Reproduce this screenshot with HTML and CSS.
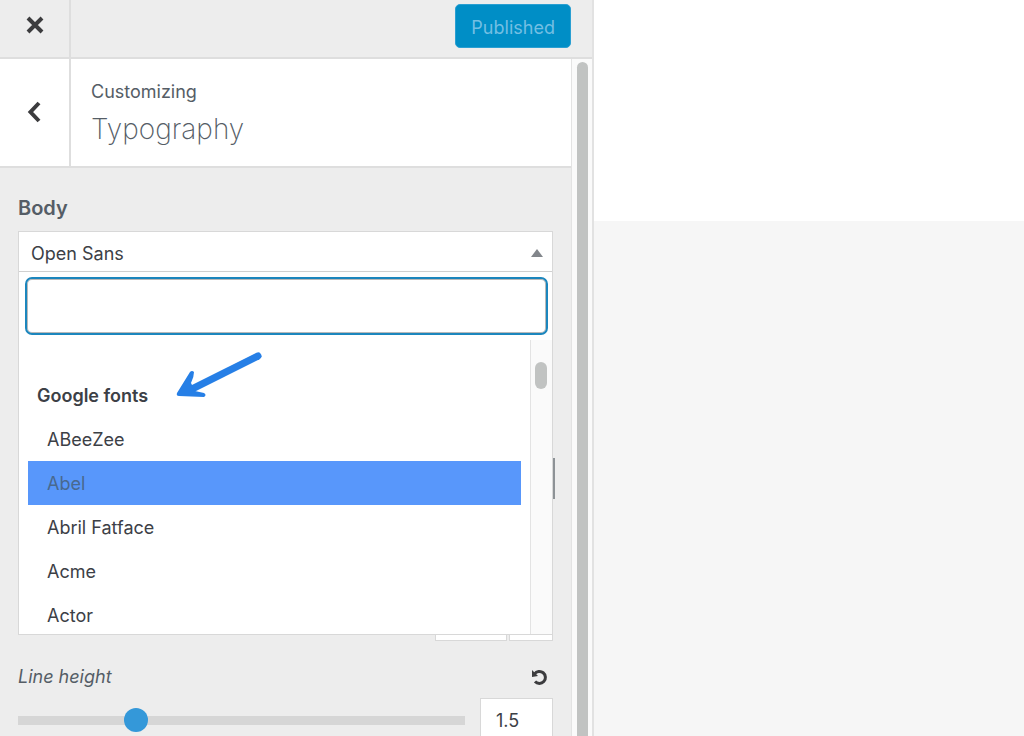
FILE: index.html
```html
<!DOCTYPE html>
<html lang="en">
<head>
    <meta charset="UTF-8">
    <title>Customize Typography</title>
    <link rel="stylesheet" href="styles.css">
</head>
<body>

<aside class="sidebar">
    <header class="topbar">
        <button type="button" class="close" aria-label="Close">
            <svg width="20" height="20" viewBox="0 0 20 20"><path d="M3 3L17 17M17 3L3 17" stroke="#3c3c3e" stroke-width="4"/></svg>
        </button>
        <button type="button" class="publish">Published</button>
    </header>

    <div class="scroller">
        <form class="panel">
            <div class="panel-head">
                <button type="button" class="back" aria-label="Back">
                    <svg width="24" height="24" viewBox="0 0 24 24"><path d="M16 3L7.500 12L16 21" fill="none" stroke="#3c3c3e" stroke-width="4"/></svg>
                </button>
                <div class="panel-title">
                    <span>Customizing</span>
                    <h2>Typography</h2>
                </div>
            </div>

            <div class="controls">
                <label class="label" for="font">Body</label>
                <div class="dropdown">
                    <select id="font" class="current">
                        <option>Open Sans</option>
                    </select>
                    <svg class="caret" width="12" height="8" viewBox="0 0 12 8"><path d="M0 8L6 0L12 8Z" fill="#82868b"/></svg>
                    <input type="search" class="search" aria-label="Search fonts">
                    <div class="list-wrap">
                        <ul class="list">
                            <li class="group">Google fonts</li>
                            <li>ABeeZee</li>
                            <li class="active">Abel</li>
                            <li>Abril Fatface</li>
                            <li>Acme</li>
                            <li>Actor</li>
                        </ul>
                        <div class="list-scroll"><div class="list-thumb"></div></div>
                    </div>
                    <div class="handle"></div>
                    <svg class="arrow" width="88" height="52" viewBox="0 0 88 52"><path d="M82 7L16 40" stroke="#267fe6" stroke-width="7" stroke-linecap="round"/><path d="M1 44L14 23Q16 21 18 23Q18 28 15 34L19 42L28 44Q31 46 28 48L3 47Q0 47 1 44Z" fill="#267fe6"/></svg>
                </div>
                <div class="units"><span class="unit-wide"></span><span class="unit"></span></div>

                <div class="row">
                    <label class="sub-label" for="line-height">Line height</label>
                    <button type="button" class="reset" aria-label="Reset">
                        <svg width="18" height="18" viewBox="0 0 18 18"><path d="M4.500 6A6 6 0 1 1 5 13.500" fill="none" stroke="#3c3c3e" stroke-width="3"/><path d="M2 2V9L8 8Z" fill="#3c3c3e"/></svg>
                    </button>
                </div>
                <div class="row">
                    <input type="range" id="line-height" class="range" min="0" max="100" value="25">
                    <input type="text" class="number" value="1.5" aria-label="Line height value">
                </div>
            </div>
        </form>
        <div class="scrollbar"><div class="thumb"></div></div>
    </div>
</aside>

<main class="preview">
    <div class="preview-head"></div>
</main>

</body>
</html>
```

FILE: styles.css
```css
* {
    box-sizing: border-box;
}
body {
    margin: 0;
    height: 100vh;
    display: flex;
    overflow: hidden;
    font-family: Inter, "Liberation Sans", sans-serif;
    font-size: 18px;
    color: #3c4046;
    background-color: #f6f6f6;
}
button {
    border: none;
    padding: 0;
    background: none;
    cursor: pointer;
}
input, select {
    font: inherit;
    color: inherit;
    background-color: white;
}
svg {
    display: block;
}
.sidebar {
    width: 58%;
    display: flex;
    flex-direction: column;
    background-color: #ededed;
    border-right: 2px solid #e2e2e2;
}
.preview {
    flex: 1;
}
.preview-head {
    height: 30%;
    background-color: white;
}
.topbar {
    display: flex;
    justify-content: space-between;
    height: 59px;
    flex-shrink: 0;
    border-bottom: 2px solid #dedede;
}
.close, .back {
    width: 71px;
    display: flex;
    align-items: center;
    justify-content: center;
    border-right: 2px solid #dedede;
}
.close {
    padding-bottom: 8px;
}
.back {
    padding-bottom: 2px;
}
.publish {
    height: 44px;
    margin: 4px 21px 0 0;
    padding: 2px 15px 0;
    border: 1px solid #2a9fd2;
    border-radius: 5px;
    background-color: #008ec6;
    color: #73bfe3;
    font: inherit;
}
.scroller {
    flex: 1;
    min-height: 0;
    display: flex;
    overflow: hidden;
}
.panel {
    flex: 1;
    min-width: 0;
    overflow: hidden;
}
.panel-head {
    display: flex;
    background-color: white;
    border-bottom: 2px solid #dedede;
}
.panel-title {
    padding: 19px 20px;
    color: #555d66;
}
.panel-title span {
    display: block;
    line-height: 28px;
}
.panel-title h2 {
    margin: 6px 0 0;
    font-size: 28px;
    font-weight: 200;
    line-height: 35px;
}
.scrollbar {
    width: 21px;
    padding: 3px 4px 0 5px;
    background-color: #fafafa;
    border-left: 1px solid #e3e3e3;
}
.thumb {
    height: 120%;
    border-radius: 6px;
    background-color: #c1c3c2;
}
.controls {
    padding: 24px 18px;
}
.label {
    display: block;
    margin-bottom: 7px;
    font-size: 20px;
    font-weight: 600;
    line-height: 32px;
    color: #555d66;
}
.dropdown {
    position: relative;
    background-color: white;
    border: 1px solid #d8d8d8;
}
.current {
    display: block;
    width: 100%;
    height: 40px;
    padding: 4px 12px 0;
    border: none;
    border-bottom: 1px solid #d0d0d0;
    appearance: none;
}
.caret {
    position: absolute;
    top: 17px;
    right: 9px;
}
.search {
    display: block;
    width: calc(100% - 10px);
    height: 58px;
    margin: 5px 4px 5px 6px;
    padding: 0 12px;
    border: 2px solid #1c86bd;
    border-radius: 7px;
    box-shadow: inset 0 0 0 1px #b9b9b9;
    appearance: none;
}
.list-wrap {
    display: flex;
    height: 294px;
}
.list {
    flex: 1;
    margin: 0;
    padding: 33px 9px 0;
    list-style: none;
    overflow: hidden;
}
.list li {
    height: 44px;
    padding: 0 19px;
    line-height: 46px;
}
.list .group {
    padding: 0 9px;
    font-weight: 600;
}
.list .active {
    background-color: #5897fb;
    color: #49698f;
}
.list-scroll {
    width: 22px;
    padding: 22px 4px 0;
    background-color: #fafafa;
    border-left: 1px solid #e3e3e3;
}
.list-thumb {
    width: 12px;
    height: 27px;
    border-radius: 6px;
    background-color: #c1c3c2;
}
.handle {
    position: absolute;
    top: 226px;
    right: -3px;
    width: 2px;
    height: 41px;
    background-color: #8d9296;
}
.arrow {
    position: absolute;
    top: 117px;
    left: 157px;
}
.units {
    display: flex;
    justify-content: flex-end;
    gap: 2px;
}
.unit-wide, .unit {
    width: 72px;
    height: 6px;
    background-color: white;
    border: 1px solid #d8d8d8;
    border-top: none;
}
.unit {
    width: 44px;
}
.row {
    display: flex;
    align-items: center;
    justify-content: space-between;
    gap: 15px;
}
.sub-label {
    margin: 20px 0 5px;
    font-style: italic;
    line-height: 32px;
    color: #555d66;
}
.reset {
    margin: 14px 5px 0 0;
}
.range {
    flex: 1;
    height: 24px;
    margin: 0;
    background: none;
    appearance: none;
}
.range::-webkit-slider-runnable-track {
    height: 9px;
    background-color: #d6d6d6;
}
.range::-webkit-slider-thumb {
    width: 24px;
    height: 24px;
    margin-top: -8px;
    border-radius: 50%;
    background-color: #3498d9;
    appearance: none;
}
.number {
    width: 73px;
    height: 44px;
    padding: 0 15px;
    border: 1px solid #d8d8d8;
}
```
